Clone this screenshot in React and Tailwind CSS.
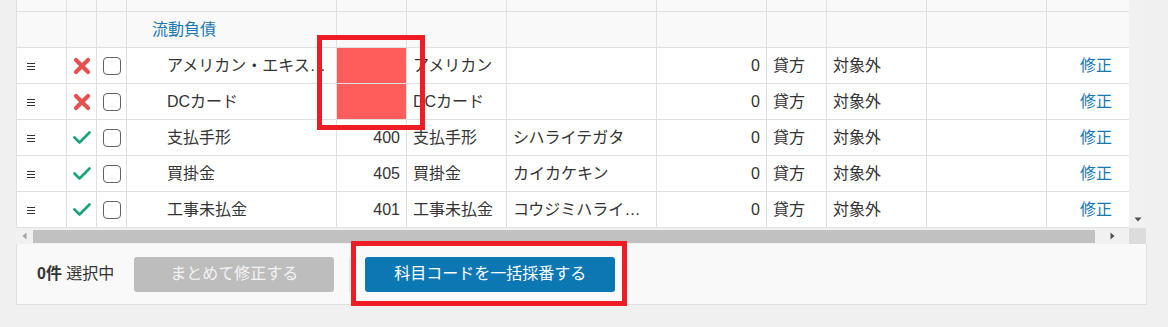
import React from "react";

const FONT = "font-['Liberation_Sans','Noto_Sans_CJK_JP',sans-serif]";

const rows = [
  { st: "x", name: "アメリカン・エキスプレス", code: "", pink: true, name2: "アメリカン", kana: "" },
  { st: "x", name: "DCカード", code: "", pink: true, name2: "DCカード", kana: "" },
  { st: "ok", name: "支払手形", code: "400", name2: "支払手形", kana: "シハライテガタ" },
  { st: "ok", name: "買掛金", code: "405", name2: "買掛金", kana: "カイカケキン" },
  { st: "ok", name: "工事未払金", code: "401", name2: "工事未払金", kana: "コウジミハライキン" },
];

function Drag() {
  return (
    <svg width="8" height="8" viewBox="0 0 8 8">
      <path d="M0 1.5H8M0 4.5H8M0 7.5H8" stroke="#333" strokeWidth="1" />
    </svg>
  );
}

function XIcon() {
  return (
    <svg width="18" height="18" viewBox="0 0 18 18">
      <path d="M3 3L15 15M15 3L3 15" stroke="#e6504f" strokeWidth="4.2" strokeLinecap="round" />
    </svg>
  );
}

function Check() {
  return (
    <svg width="18" height="14" viewBox="0 0 18 14">
      <path d="M1.5 6.5L6.5 11.5L16.5 1.5" stroke="#17a47c" strokeWidth="2.6" fill="none" strokeLinecap="round" strokeLinejoin="round" />
    </svg>
  );
}

function Box() {
  return <div className="w-[18px] h-[18px] rounded-[4px] border-[1.5px] border-[#5f6266] bg-white" />;
}

const cell = "border-r border-[#e0e0e0] h-full flex items-center shrink-0";

function GridRow({ h, bg, children }) {
  return (
    <div className={`flex ${h} ${bg} border-b border-[#e0e0e0]`}>{children}</div>
  );
}

function EmptyCells() {
  return (
    <>
      <div className={`${cell} w-[50px]`} />
      <div className={`${cell} w-[30px]`} />
      <div className={`${cell} w-[30px]`} />
    </>
  );
}

function TailCells() {
  return (
    <>
      <div className={`${cell} w-[70px]`} />
      <div className={`${cell} w-[100px]`} />
      <div className={`${cell} w-[150px]`} />
      <div className={`${cell} w-[110px]`} />
      <div className={`${cell} w-[60px]`} />
      <div className={`${cell} w-[100px]`} />
      <div className={`${cell} w-[120px]`} />
      <div className="h-full w-[82px] shrink-0" />
    </>
  );
}

export default function App() {
  return (
    <div className={`relative w-[1168px] h-[327px] overflow-hidden bg-[#f0f0f0] text-[16px] text-[#333] ${FONT}`}>
      <div className="ml-[16px] w-[1131px]">
        <div className="flex">
          <div className="w-[1113px] border-l border-[#e0e0e0] bg-white">
            <GridRow h="h-[12px]" bg="bg-[#f9f9f9]">
              <EmptyCells />
              <div className={`${cell} w-[210px]`} />
              <TailCells />
            </GridRow>
            <GridRow h="h-[36px]" bg="bg-[#f9f9f9]">
              <EmptyCells />
              <div className={`${cell} w-[210px] pl-[25px] text-[#1a78b5]`}>流動負債</div>
              <TailCells />
            </GridRow>
            {rows.map((r, i) => (
              <GridRow key={i} h="h-[36px]" bg="bg-white">
                <div className={`${cell} w-[50px] justify-start pl-[10px]`}>
                  <Drag />
                </div>
                <div className={`${cell} w-[30px] justify-center`}>
                  {r.st === "x" ? <XIcon /> : <Check />}
                </div>
                <div className={`${cell} w-[30px] justify-center`}>
                  <Box />
                </div>
                <div className={`${cell} w-[210px] pl-[40px] pr-[6px]`}>
                  <span className="truncate block">{r.name}</span>
                </div>
                <div className={`${cell} w-[70px] justify-end pr-[6px] ${r.pink ? "bg-[#ff5c5c]" : ""}`}>{r.code}</div>
                <div className={`${cell} w-[100px] pl-[6px] pr-[6px]`}>
                  <span className="truncate block">{r.name2}</span>
                </div>
                <div className={`${cell} w-[150px] pl-[6px] pr-[6px] min-w-0`}>
                  <span className="truncate block">{r.kana}</span>
                </div>
                <div className={`${cell} w-[110px] justify-end pr-[6px]`}>0</div>
                <div className={`${cell} w-[60px] pl-[6px]`}>貸方</div>
                <div className={`${cell} w-[100px] pl-[6px]`}>対象外</div>
                <div className={`${cell} w-[120px]`} />
                <div className="h-full w-[82px] shrink-0 flex items-center justify-end pr-[17px] text-[#1a78b5]">修正</div>
              </GridRow>
            ))}
          </div>
          <div className="w-[17px] bg-[#f1f1f1] flex flex-col justify-end items-center pb-[6px]">
            <svg width="8" height="5" viewBox="0 0 8 5">
              <path d="M0.5 0.5H7.5L4 4.5Z" fill="#505050" />
            </svg>
          </div>
        </div>
        <div className="flex h-[16px]">
          <div className="w-[1113px] bg-[#f1f1f1] flex items-start">
            <div className="w-[17px] h-full flex items-center justify-center">
              <svg width="5" height="8" viewBox="0 0 5 8">
                <path d="M4.5 0.5V7.5L0.5 4Z" fill="#a3a3a3" />
              </svg>
            </div>
            <div className="mt-[2px] h-[13px] w-[1062px] bg-[#c1c1c1]" />
            <div className="flex-1 h-full flex items-center justify-center">
              <svg width="5" height="8" viewBox="0 0 5 8">
                <path d="M0.5 0.5V7.5L4.5 4Z" fill="#505050" />
              </svg>
            </div>
          </div>
          <div className="w-[17px] bg-[#dcdcdc]" />
        </div>
        <div className="h-[61px] w-[1131px] bg-[#f9f9f9] border-l border-r border-b border-[#e0e0e0] flex items-center pl-[20px]">
          <span className="whitespace-nowrap">
            <span className="font-bold">0件</span> 選択中
          </span>
          <button className="ml-[20px] w-[200px] h-[35px] rounded-[3px] bg-[#bdbdbd] text-[#f4f4f4] text-[16px]">
            まとめて修正する
          </button>
          <div className="ml-[15px] w-px h-[35px] bg-[#e3e3e3]" />
          <button className="ml-[15px] w-[250px] h-[35px] rounded-[3px] bg-[#0b78b4] text-white text-[16px]">
            科目コードを一括採番する
          </button>
        </div>
      </div>

      <div className="absolute left-[317px] top-[35px] w-[108px] h-[95px] border-[5px] border-[#ee1c25]" />
      <div className="absolute left-[351px] top-[241px] w-[276px] h-[65px] border-[5px] border-[#ee1c25]" />
    </div>
  );
}
